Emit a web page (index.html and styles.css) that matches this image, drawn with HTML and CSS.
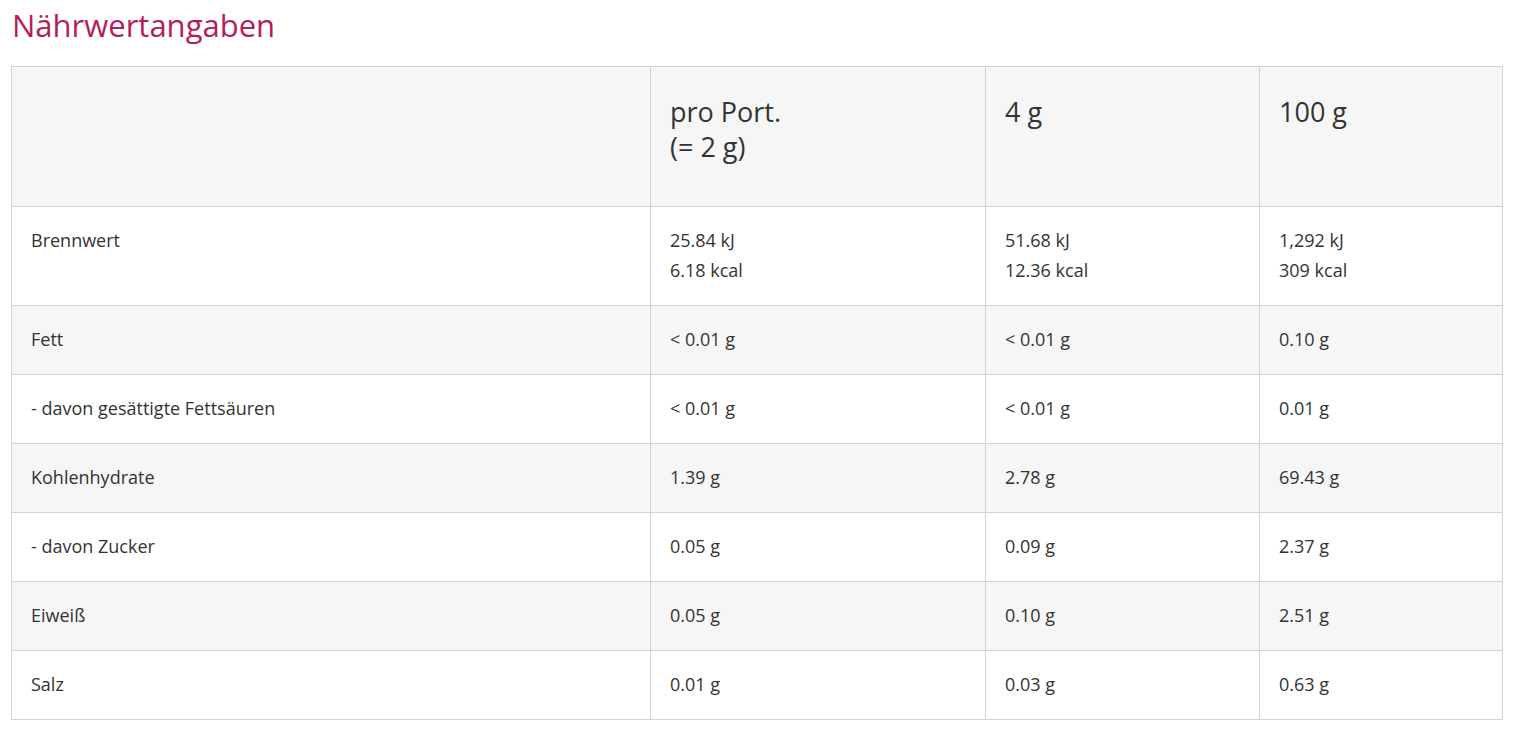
FILE: index.html
```html
<!DOCTYPE html>
<html lang="de">
<head>
<meta charset="utf-8">
<title>Nährwertangaben</title>
<link rel="stylesheet" href="styles.css">
</head>
<body>
<section class="nutrition">
  <h2 class="nutrition-title">Nährwertangaben</h2>
  <table class="nutrition-table">
    <colgroup>
      <col class="col-name">
      <col class="col-a">
      <col class="col-b">
      <col class="col-c">
    </colgroup>
    <thead>
      <tr class="row-gray">
        <th></th>
        <th>pro Port.<br>(= 2 g)</th>
        <th>4 g</th>
        <th>100 g</th>
      </tr>
    </thead>
    <tbody>
      <tr class="row-white">
        <td>Brennwert</td>
        <td>25.84 kJ<br>6.18 kcal</td>
        <td>51.68 kJ<br>12.36 kcal</td>
        <td>1,292 kJ<br>309 kcal</td>
      </tr>
      <tr class="row-gray">
        <td>Fett</td>
        <td>&lt; 0.01 g</td>
        <td>&lt; 0.01 g</td>
        <td>0.10 g</td>
      </tr>
      <tr class="row-white">
        <td>- davon gesättigte Fettsäuren</td>
        <td>&lt; 0.01 g</td>
        <td>&lt; 0.01 g</td>
        <td>0.01 g</td>
      </tr>
      <tr class="row-gray">
        <td>Kohlenhydrate</td>
        <td>1.39 g</td>
        <td>2.78 g</td>
        <td>69.43 g</td>
      </tr>
      <tr class="row-white">
        <td>- davon Zucker</td>
        <td>0.05 g</td>
        <td>0.09 g</td>
        <td>2.37 g</td>
      </tr>
      <tr class="row-gray">
        <td>Eiweiß</td>
        <td>0.05 g</td>
        <td>0.10 g</td>
        <td>2.51 g</td>
      </tr>
      <tr class="row-white">
        <td>Salz</td>
        <td>0.01 g</td>
        <td>0.03 g</td>
        <td>0.63 g</td>
      </tr>
    </tbody>
  </table>
</section>
</body>
</html>
```

FILE: styles.css
```css
html, body {
  margin: 0;
  padding: 0;
  background: #ffffff;
}

body {
  font-family: "Open Sans", "Noto Sans", "Liberation Sans", sans-serif;
  color: #333333;
}

.nutrition {
  padding: 0 12px 0 11px;
}

.nutrition-title {
  margin: 0;
  padding-top: 4px;
  padding-left: 1px;
  height: 66px;
  box-sizing: border-box;
  font-size: 31px;
  line-height: 42px;
  font-weight: 400;
  color: #b51c5c;
}

.nutrition-table {
  width: 1491px;
  border-collapse: collapse;
  table-layout: fixed;
}

.col-name { width: 639px; }
.col-a { width: 335px; }
.col-b { width: 274px; }
.col-c { width: 243px; }

.nutrition-table th,
.nutrition-table td {
  border: 1px solid #d2d2d2;
  text-align: left;
  vertical-align: top;
  font-weight: 400;
}

.nutrition-table th {
  font-size: 27px;
  line-height: 35px;
  padding: 27px 19px 41px;
  height: 140px;
  box-sizing: border-box;
}

.nutrition-table td {
  font-size: 18px;
  line-height: 30px;
  padding: 18px 19px 20px;
}

.row-gray { background: #f6f6f6; }
.row-white { background: #ffffff; }
```
